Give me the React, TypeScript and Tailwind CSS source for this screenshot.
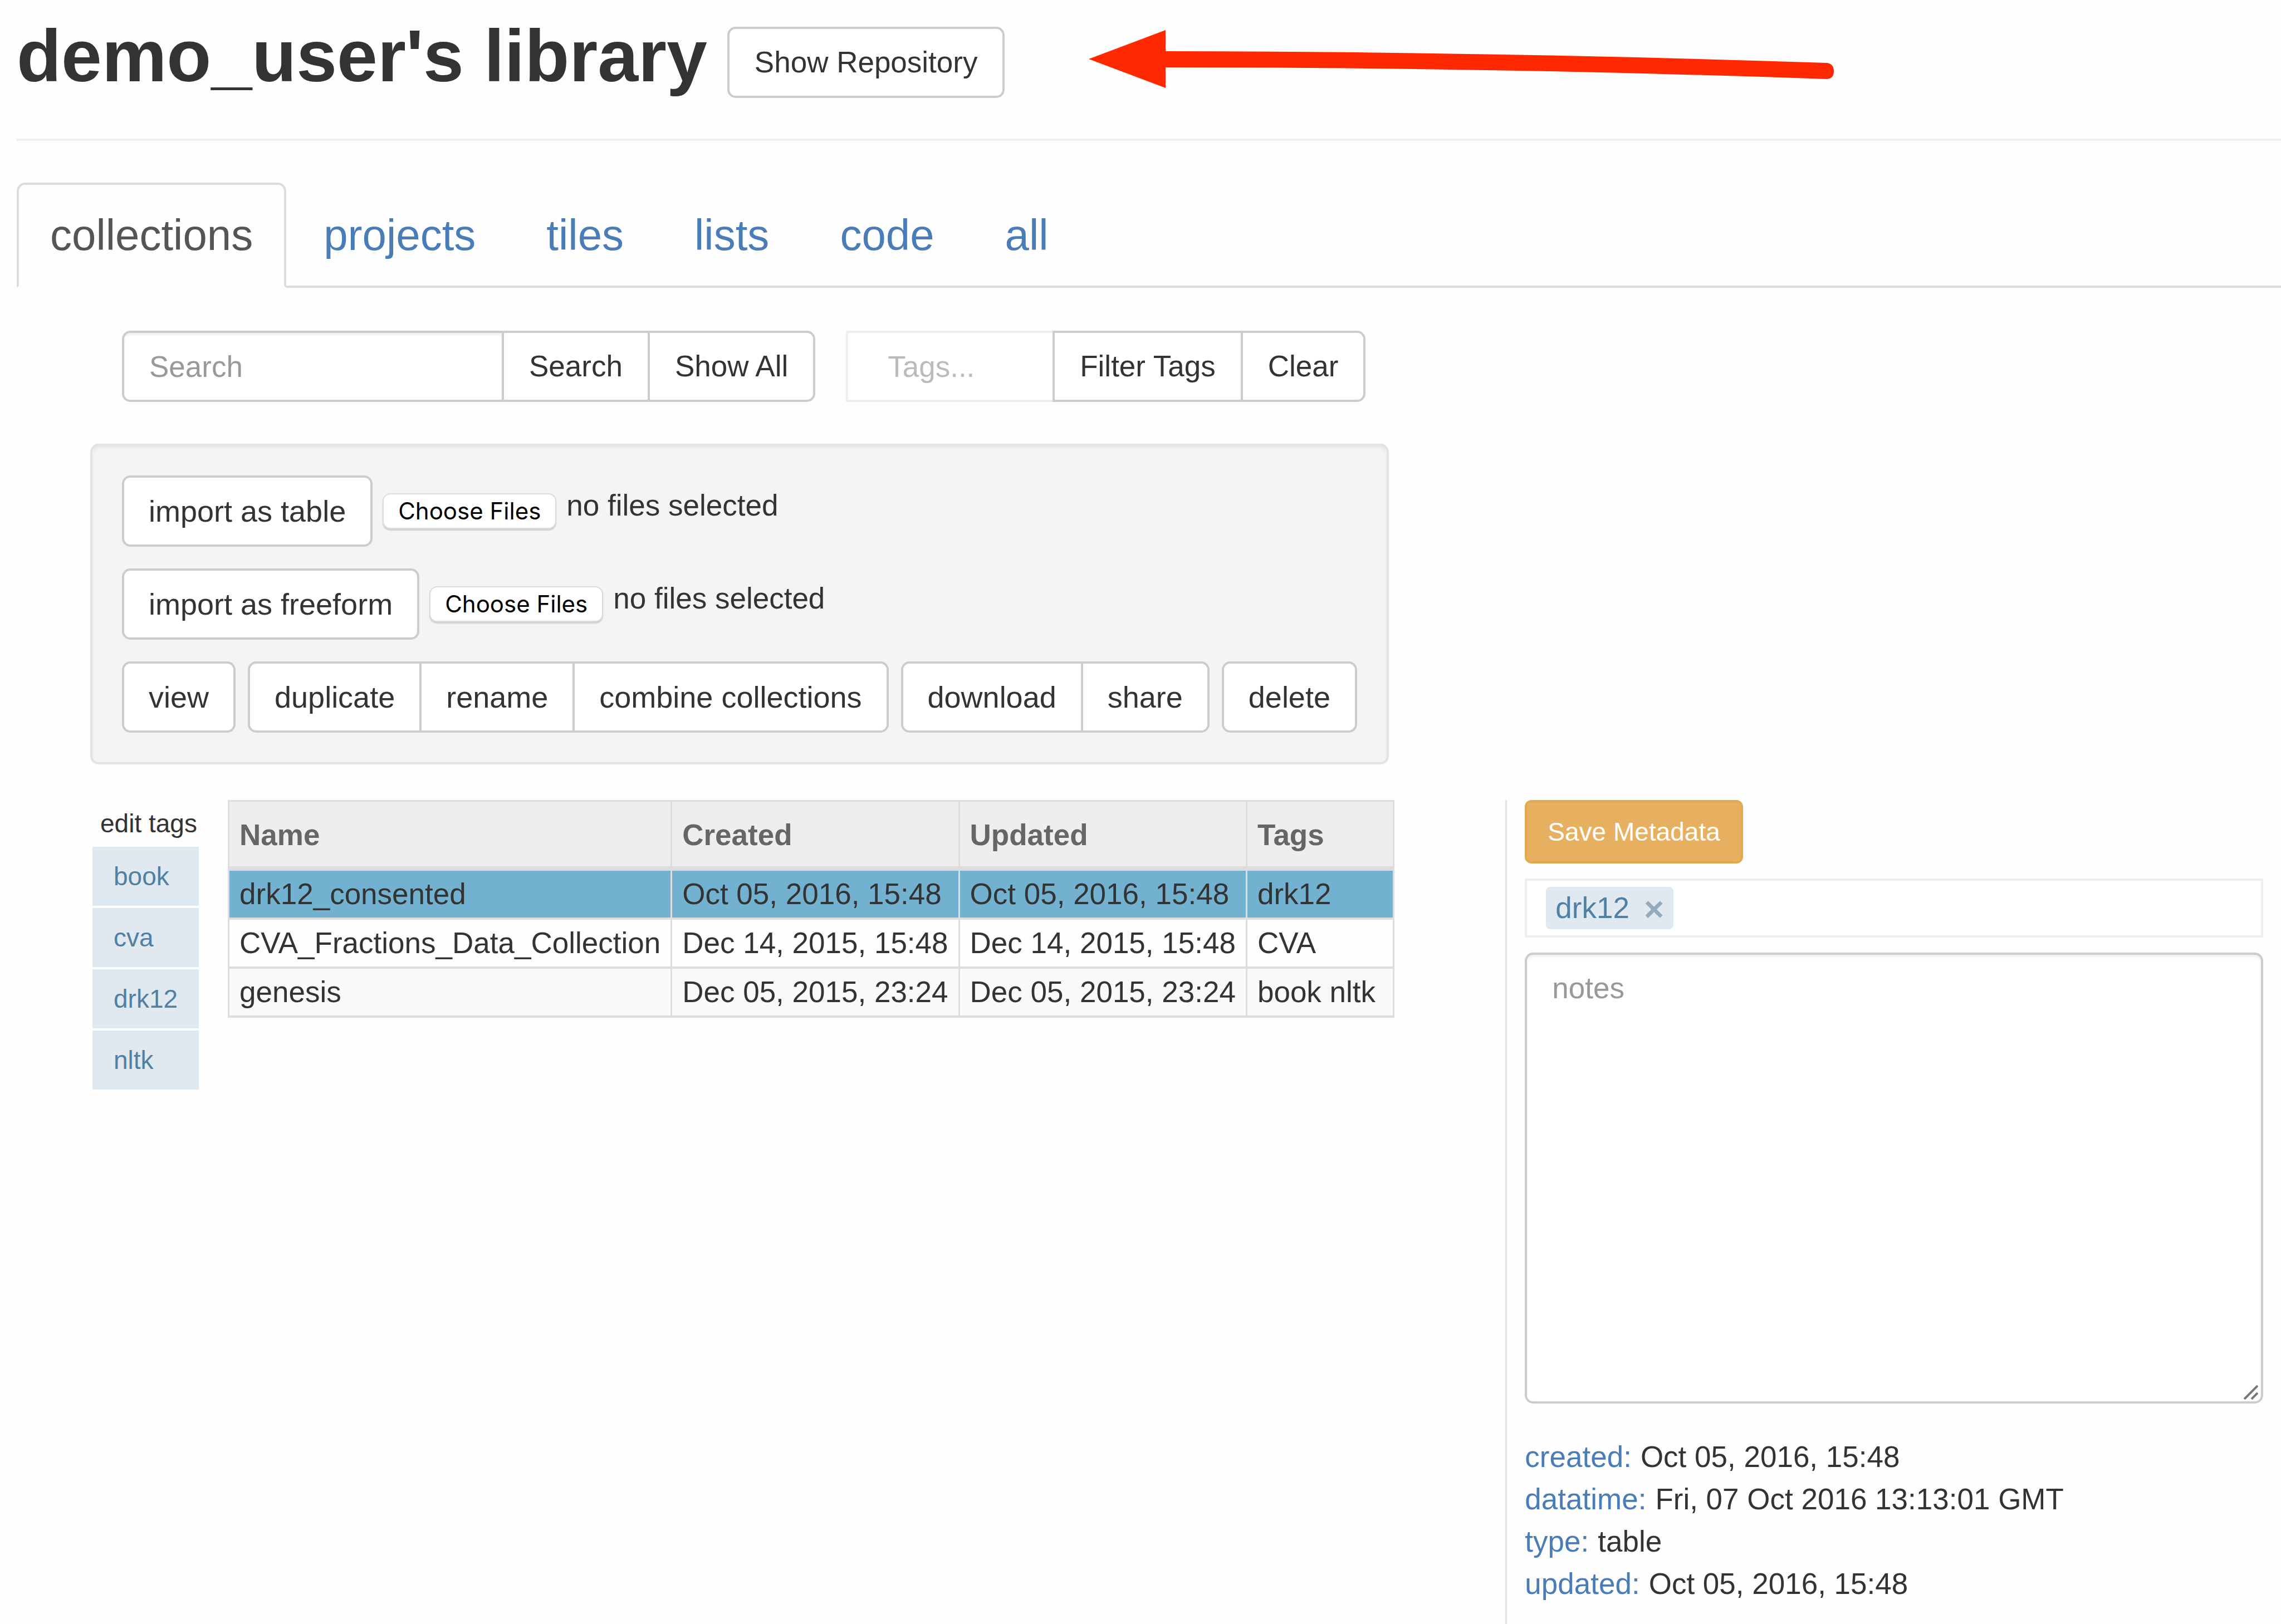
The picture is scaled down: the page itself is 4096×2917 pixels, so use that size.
import React, { useRef } from "react";

const tabs = ["collections", "projects", "tiles", "lists", "code", "all"];
const tags = ["book", "cva", "drk12", "nltk"];
const columns = ["Name", "Created", "Updated", "Tags"];
const rows = [
  ["drk12_consented", "Oct 05, 2016, 15:48", "Oct 05, 2016, 15:48", "drk12"],
  ["CVA_Fractions_Data_Collection", "Dec 14, 2015, 15:48", "Dec 14, 2015, 15:48", "CVA"],
  ["genesis", "Dec 05, 2015, 23:24", "Dec 05, 2015, 23:24", "book nltk"],
];
const rowColors = ["bg-[#73b1d0]", "bg-[#fefefe]", "bg-[#f9f9f9]"];
const metadata = [
  ["created", "Oct 05, 2016, 15:48"],
  ["datatime", "Fri, 07 Oct 2016 13:13:01 GMT"],
  ["type", "table"],
  ["updated", "Oct 05, 2016, 15:48"],
];

function Button({
  children,
  className = "rounded-[15px]",
  padding = "px-[45px]",
}: {
  children: React.ReactNode;
  className?: string;
  padding?: string;
}) {
  return (
    <button
      type="button"
      className={`shrink-0 whitespace-nowrap border-4 border-[#ccc] bg-white py-[22px] leading-[76px] text-[#333] ${padding} ${className}`}
    >
      {children}
    </button>
  );
}

function ButtonGroup({ labels }: { labels: string[] }) {
  return (
    <div className="flex">
      {labels.map((label, i) => {
        const left = i === 0 ? "rounded-l-[15px]" : "-ml-1";
        const right = i === labels.length - 1 ? "rounded-r-[15px]" : "";
        return (
          <Button key={label} padding="px-11" className={`${left} ${right}`}>
            {label}
          </Button>
        );
      })}
    </div>
  );
}

function ImportRow({ label }: { label: string }) {
  const picker = useRef<HTMLInputElement>(null);
  return (
    <div className="flex items-center">
      <Button padding="px-11">{label}</Button>
      <input ref={picker} type="file" multiple className="hidden" aria-label={label} />
      <button
        type="button"
        onClick={() => picker.current?.click()}
        className="ml-[18px] rounded-[14px] border-2 border-[#dcdcdc] bg-white px-[26px] font-['Inter',sans-serif] text-[42px] leading-[60px] text-black shadow-[0_3px_2px_#cfcfcf]"
      >
        Choose Files
      </button>
      <span className="mb-5 ml-[18px] whitespace-nowrap text-[53px]">no files selected</span>
    </div>
  );
}

export default function App() {
  return (
    <div className="min-h-screen bg-[#fefefe] font-['Liberation_Sans',Arial,sans-serif] text-[53px] leading-[76px] text-[#333]">
      <div className="pl-[30px]">
        <header className="flex items-start border-b-4 border-[#eee] pt-[26px] pb-[73px]">
          <h1 className="whitespace-nowrap text-[131px] leading-[150px] font-bold">demo_user's library</h1>
          <div className="mt-[22px] ml-9">
            <Button>Show Repository</Button>
          </div>
          <svg className="mt-7 ml-[151px] h-[104px] w-[1340px]" viewBox="0 0 1340 104" fill="#ff2800" aria-hidden="true">
            <path d="M0 52 L138 0 V38 Q732 39 1326 59 Q1338 61 1338 74 Q1338 87 1326 88 Q732 67 138 67 V104 Z" />
          </svg>
        </header>

        <nav className="mt-[75px] flex gap-[7px] border-b-4 border-[#ddd] text-[78px] leading-[109px]">
          {tabs.map((tab, i) => (
            <a
              key={tab}
              href={`#${tab}`}
              className={
                i === 0
                  ? "-mb-1 rounded-t-[15px] border-4 border-[#ddd] border-b-[#fefefe] bg-[#fefefe] px-14 py-9 text-[#555]"
                  : "-mb-1 border-4 border-transparent px-14 py-9 text-[#4a7db8]"
              }
            >
              {tab}
            </a>
          ))}
        </nav>
      </div>

      <main>
        <div className="mt-[77px] flex pl-[219px]">
          <input
            type="text"
            aria-label="Search"
            placeholder="Search"
            className="h-[128px] w-[686px] rounded-l-[15px] border-4 border-[#ccc] bg-white px-[45px] shadow-[inset_0_4px_4px_rgba(0,0,0,0.06)] placeholder:text-[#999]"
          />
          <div className="-ml-1 flex">
            <Button className="">Search</Button>
            <Button className="-ml-1 rounded-r-[15px]">Show All</Button>
          </div>
          <input
            type="text"
            aria-label="Tags"
            placeholder="Tags..."
            className="ml-[55px] h-[128px] w-[375px] border-4 border-[#eee] bg-white px-[71px] placeholder:text-[#bbb]"
          />
          <div className="-ml-1 flex">
            <Button className="">Filter Tags</Button>
            <Button className="-ml-1 rounded-r-[15px]">Clear</Button>
          </div>
        </div>

        <section className="mt-[75px] ml-[162px] flex w-fit flex-col gap-[39px] rounded-[15px] border-4 border-[#e3e3e3] bg-[#f4f4f4] p-[53px] text-[54px] shadow-[inset_0_4px_4px_rgba(0,0,0,0.05)]">
          <ImportRow label="import as table" />
          <ImportRow label="import as freeform" />
          <div className="flex gap-[22px]">
            <ButtonGroup labels={["view"]} />
            <ButtonGroup labels={["duplicate", "rename", "combine collections"]} />
            <ButtonGroup labels={["download", "share"]} />
            <ButtonGroup labels={["delete"]} />
          </div>
        </section>

        <div className="mt-16 grid grid-cols-[66%_34%]">
          <div className="flex items-start gap-[52px] pl-[166px]">
            <div className="flex flex-col gap-1 text-[46px] text-[#5280a3]">
              <button type="button" className="mt-2.5 mb-1.5 whitespace-nowrap pl-[14px] text-left leading-[64px] text-[#333]">
                edit tags
              </button>
              {tags.map((tag) => (
                <button key={tag} type="button" className="bg-[#e0e9f0] px-[38px] text-left leading-[106px]">
                  {tag}
                </button>
              ))}
            </div>

            <table className="border-collapse border-[3px] border-[#ddd] text-left whitespace-nowrap">
              <thead>
                <tr className="border-b-8 border-[#ddd] bg-[#eee] text-[#666]">
                  {columns.map((column) => (
                    <th
                      key={column}
                      className="border-x-[3px] border-[#ddd] px-[18px] pt-[22px] pb-[18px] font-bold last:w-[264px]"
                    >
                      {column}
                    </th>
                  ))}
                </tr>
              </thead>
              <tbody>
                {rows.map((row, r) => (
                  <tr key={row[0]} className={`border-b-4 border-[#ddd] ${rowColors[r]}`}>
                    {row.map((cell, c) => (
                      <td key={c} className="border-x-[3px] border-[#ddd] px-[18px] py-1">
                        {cell}
                      </td>
                    ))}
                  </tr>
                ))}
              </tbody>
            </table>
          </div>

          <aside className="flex flex-col border-l-[3px] border-[#e1e1e1] px-8 pb-9">
            <button
              type="button"
              className="self-start rounded-[12px] border-4 border-[#e4a850] bg-[#e6b060] px-[37px] py-[19px] text-[46px] leading-[68px] text-white"
            >
              Save Metadata
            </button>
            <div className="mt-[27px] border-4 border-[#eee] bg-white px-[34px] py-[11px]">
              <div className="flex w-fit items-center gap-[26px] rounded-[8px] bg-[#e0e9f0] px-[17px] text-[#5280a3]">
                <span>drk12</span>
                <button
                  type="button"
                  aria-label="Remove drk12"
                  className="pt-1 text-[62px] leading-[72px] font-bold text-[#93abbd]"
                >
                  ×
                </button>
              </div>
            </div>
            <div className="relative mt-[27px] flex">
              <textarea
                aria-label="notes"
                placeholder="notes"
                className="h-[810px] w-full resize-none rounded-[15px] border-4 border-[#ccc] bg-white px-[45px] py-[22px] shadow-[inset_0_4px_4px_rgba(0,0,0,0.06)] placeholder:text-[#999]"
              />
              <svg
                className="absolute right-[9px] bottom-[7px] h-[26px] w-[26px]"
                viewBox="0 0 26 26"
                stroke="#777"
                strokeWidth="4"
                aria-hidden="true"
              >
                <path d="M1 25 L25 1 M14 25 L25 14" />
              </svg>
            </div>
            <dl className="mt-[58px]">
              {metadata.map(([key, value]) => (
                <div key={key} className="flex gap-4">
                  <dt className="text-[#4a7db8]">{key}:</dt>
                  <dd>{value}</dd>
                </div>
              ))}
            </dl>
          </aside>
        </div>
      </main>
    </div>
  );
}
